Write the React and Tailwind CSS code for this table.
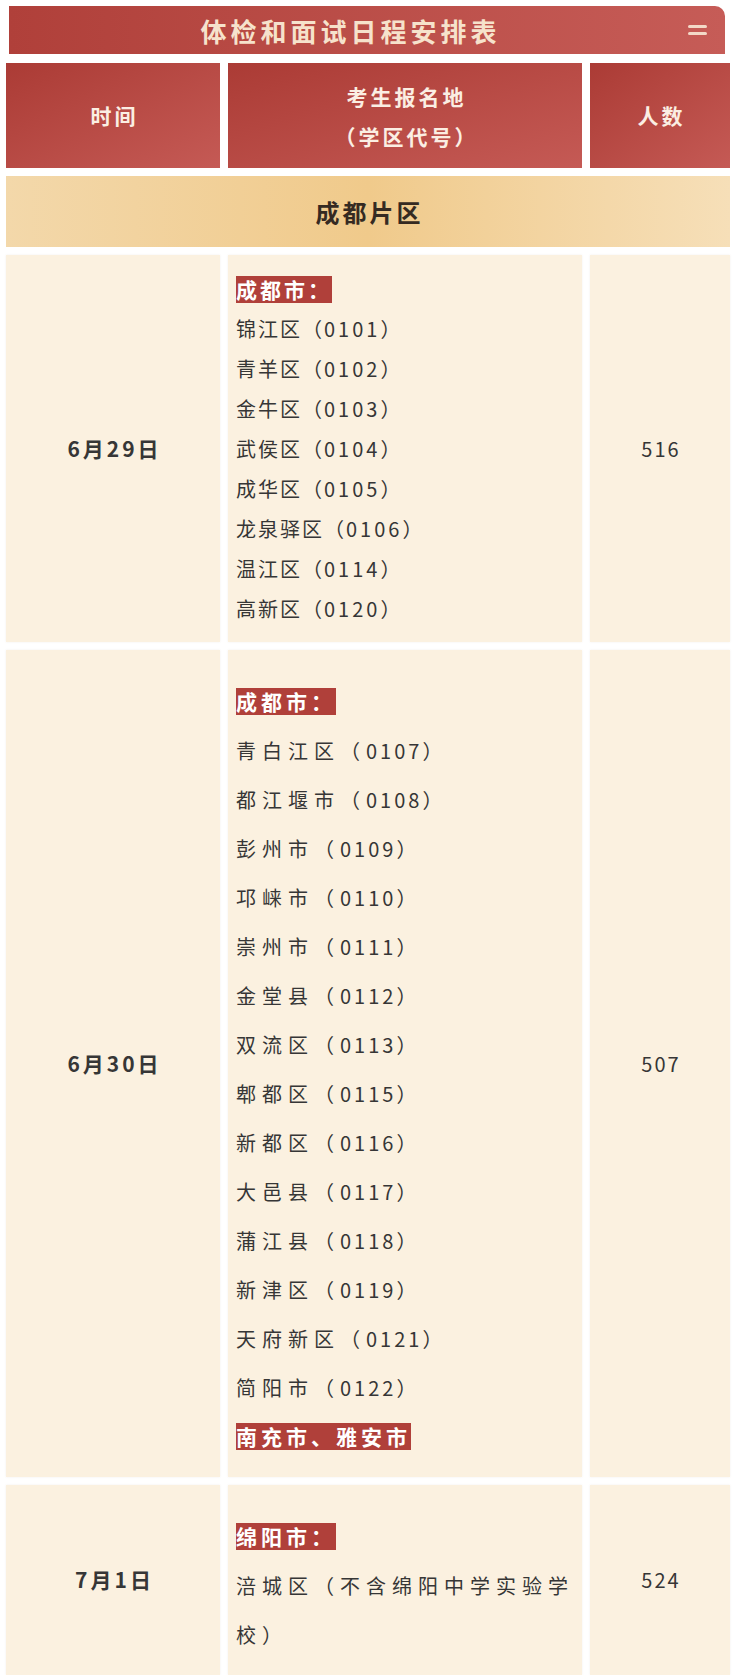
import React from "react";

const row1 = [
  ["锦江区", "0101"],
  ["青羊区", "0102"],
  ["金牛区", "0103"],
  ["武侯区", "0104"],
  ["成华区", "0105"],
  ["龙泉驿区", "0106"],
  ["温江区", "0114"],
  ["高新区", "0120"],
];

const row2 = [
  ["青白江区", "0107"],
  ["都江堰市", "0108"],
  ["彭州市", "0109"],
  ["邛崃市", "0110"],
  ["崇州市", "0111"],
  ["金堂县", "0112"],
  ["双流区", "0113"],
  ["郫都区", "0115"],
  ["新都区", "0116"],
  ["大邑县", "0117"],
  ["蒲江县", "0118"],
  ["新津区", "0119"],
  ["天府新区", "0121"],
  ["简阳市", "0122"],
];

function Label({ children, wide }) {
  return (
    <span
      className={
        "inline-block h-[27px] leading-[27px] bg-[#b0403a] text-white font-bold text-[21px] " +
        (wide ? "tracking-[4px]" : "tracking-[3px]")
      }
    >
      {children}
    </span>
  );
}

function Cell({ children, className = "" }) {
  return (
    <div className={"bg-[#fbf1e0] shadow-[0_0_2px_rgba(120,80,40,0.08)] " + className}>
      {children}
    </div>
  );
}

export default function App() {
  return (
    <div
      className="min-h-screen bg-white pt-[6px] text-[#363636]"
      style={{ fontFamily: '"Noto Sans CJK SC", "Noto Sans", sans-serif' }}
    >
      {/* title bar */}
      <div className="ml-[9px] w-[716px] h-[48px] rounded-tr-[10px] flex items-center bg-linear-to-r from-[#b0403a] to-[#c65c57]">
        <div className="flex-1 text-center pl-[4px] text-[26px] font-bold tracking-[4px] text-[#f6e2cc]">
          体检和面试日程安排表
        </div>
        <div className="mr-[18px] w-[19px] flex flex-col gap-[4px]">
          <span className="block h-[3px] bg-[#f3d9c8] rounded-sm" />
          <span className="block h-[3px] bg-[#f3d9c8] rounded-sm" />
        </div>
      </div>

      <div className="ml-[6px] w-[724px] mt-[9px] flex flex-col gap-[8px]">
        {/* header */}
        <div className="grid grid-cols-[214px_354px_140px] gap-x-[8px] h-[105px] text-[#fbeee3] font-bold text-[21px]">
          <div className="flex items-center justify-center pl-[3px] tracking-[3px] bg-linear-to-br from-[#ab3b35] to-[#c55a55]">
            时间
          </div>
          <div className="flex flex-col items-center justify-center pl-[3px] tracking-[3px] leading-[40px] bg-linear-to-br from-[#ab3b35] to-[#c55a55]">
            <div>考生报名地</div>
            <div>（学区代号）</div>
          </div>
          <div className="flex items-center justify-center pl-[3px] tracking-[3px] bg-linear-to-br from-[#ab3b35] to-[#c55a55]">
            人数
          </div>
        </div>

        {/* band */}
        <div className="h-[71px] flex items-center justify-center pl-[3px] text-[24px] font-bold tracking-[3px] text-[#352a22] bg-linear-to-r from-[#f3d8aa] via-[#f0ca8b] to-[#f6dfb8]">
          成都片区
        </div>

        {/* 6月29日 */}
        <div className="grid grid-cols-[214px_354px_140px] gap-x-[8px]">
          <Cell className="flex items-center justify-center pl-[3px] text-[21px] font-bold tracking-[3px]">
            6月29日
          </Cell>
          <Cell className="pl-[8px] pt-[14px] pb-[13px] text-[20px] tracking-[2px]">
            <div className="h-[40px] flex items-center">
              <Label>成都市：</Label>
            </div>
            {row1.map(([n, c]) => (
              <div key={c} className="h-[40px] leading-[40px]">
                {n}（<span className="tracking-[3px]">{c}</span>）
              </div>
            ))}
          </Cell>
          <Cell className="flex items-center justify-center pl-[2px] text-[20px] tracking-[2px]">
            516
          </Cell>
        </div>

        {/* 6月30日 */}
        <div className="grid grid-cols-[214px_354px_140px] gap-x-[8px]">
          <Cell className="flex items-center justify-center pl-[3px] text-[21px] font-bold tracking-[3px]">
            6月30日
          </Cell>
          <Cell className="pl-[8px] pt-[27px] pb-[16px] text-[20px]">
            <div className="h-[49px] flex items-center">
              <Label wide>成都市：</Label>
            </div>
            {row2.map(([n, c]) => (
              <div key={c} className="h-[49px] leading-[49px] tracking-[6px]">
                {n}（<span className="tracking-[3px]">{c}</span>）
              </div>
            ))}
            <div className="h-[49px] flex items-center">
              <Label wide>南充市、雅安市</Label>
            </div>
          </Cell>
          <Cell className="flex items-center justify-center pl-[2px] text-[20px] tracking-[2px]">
            507
          </Cell>
        </div>

        {/* 7月1日 */}
        <div className="grid grid-cols-[214px_354px_140px] gap-x-[8px]">
          <Cell className="flex items-center justify-center pl-[3px] text-[21px] font-bold tracking-[3px]">
            7月1日
          </Cell>
          <Cell className="pl-[8px] pr-[4px] pt-[27px] pb-[16px] text-[20px]">
            <div className="h-[49px] flex items-center">
              <Label wide>绵阳市：</Label>
            </div>
            <div className="leading-[49px] tracking-[6px]">
              涪城区（不含绵阳中学实验学校）
            </div>
          </Cell>
          <Cell className="flex items-center justify-center pl-[2px] text-[20px] tracking-[2px]">
            524
          </Cell>
        </div>
      </div>
    </div>
  );
}
